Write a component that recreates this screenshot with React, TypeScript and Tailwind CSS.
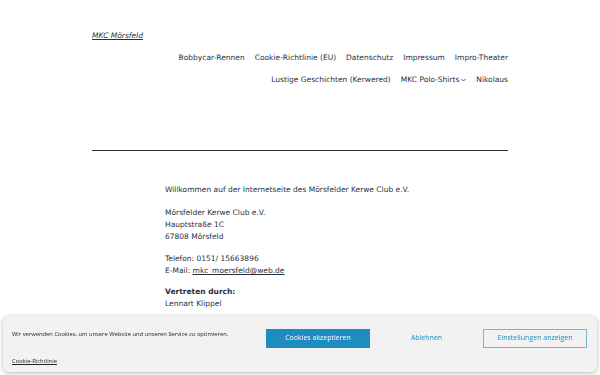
const navTop = ['Bobbycar-Rennen', 'Cookie-Richtlinie (EU)', 'Datenschutz', 'Impressum', 'Impro-Theater'];

export default function App() {
  return (
    <div className="min-h-[375px] bg-white text-[#28303d]" style={{ fontFamily: '"DejaVu Sans", sans-serif' }}>
      <header className="mx-auto w-[416px] pt-[21px]">
        <a className="text-[7.5px] italic underline text-[#28303d]">MKC Mörsfeld</a>
        <nav className="mt-[7px] flex flex-col items-end gap-[10px] text-[7.5px] leading-[12px]">
          <ul className="flex gap-[10px]">
            {navTop.map((n) => (
              <li key={n}>{n}</li>
            ))}
          </ul>
          <ul className="flex gap-[10px]">
            <li>Lustige Geschichten (Kerwered)</li>
            <li className="flex items-center gap-[2px]">
              MKC Polo-Shirts
              <svg width="5" height="4" viewBox="0 0 10 8" fill="none" stroke="currentColor" strokeWidth="1.6">
                <path d="M1 2l4 4 4-4" />
              </svg>
            </li>
            <li>Nikolaus</li>
          </ul>
        </nav>
        <hr className="mt-[64px] border-t-[1.5px] border-[#28303d]" />
      </header>

      <main className="mx-auto mt-[33px] w-[270px] text-[7.5px] leading-[12px] text-[#28303d]">
        <p>Willkommen auf der Internetseite des Mörsfelder Kerwe Club e.V.</p>
        <p className="mt-[11px]">
          Mörsfelder Kerwe Club e.V.
          <br />
          Hauptstraße 1C
          <br />
          67808 Mörsfeld
        </p>
        <p className="mt-[10px]">
          Telefon: 0151/ 15663896
          <br />
          E-Mail: <span className="underline">mkc_moersfeld@web.de</span>
        </p>
        <p className="mt-[9px] font-bold">Vertreten durch:</p>
        <p>Lennart Klippel</p>
      </main>

      <div
        className="fixed bottom-[3px] left-[3px] right-[3px] flex h-[56px] items-start justify-between rounded-[6px] bg-[#f2f2f2] pl-[9px] pr-[10px] shadow-[0_1px_4px_rgba(0,0,0,0.3)]"
        style={{ fontFamily: '"Open Sans", sans-serif' }}
      >
        <div className="flex flex-col pt-[14px] text-[5.8px] leading-[8px] text-[#222]">
          <p>Wir verwenden Cookies, um unsere Website und unseren Service zu optimieren.</p>
          <a className="mt-[19px] underline">Cookie-Richtlinie</a>
        </div>
        <div className="mt-[13px] flex items-center gap-[11px] text-[7px]">
          <button className="h-[19px] w-[104px] bg-[#1e8cbe] text-white">Cookies akzeptieren</button>
          <button className="h-[19px] w-[91px] text-[#1e8cbe]">Ablehnen</button>
          <button className="h-[19px] w-[104px] border border-[#1e8cbe]/60 text-[#1e8cbe]">Einstellungen anzeigen</button>
        </div>
      </div>
    </div>
  );
}
